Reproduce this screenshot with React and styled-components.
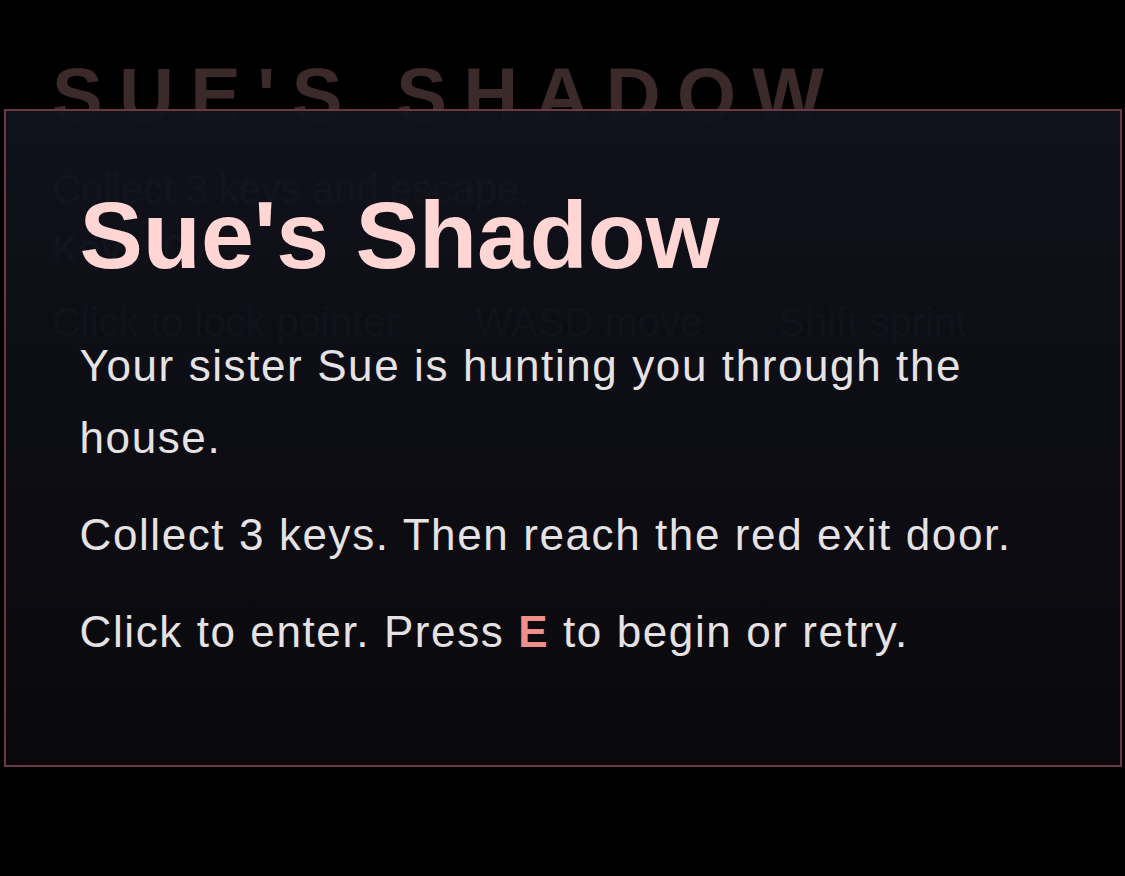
import React from "react";
import styled, { createGlobalStyle } from "styled-components";

const Global = createGlobalStyle`
  html, body { margin: 0; padding: 0; background: #000; }
  body { font-family: "Liberation Sans", Arial, sans-serif; overflow: hidden; }
  * { box-sizing: border-box; }
`;

const Stage = styled.div`
  position: relative;
  width: 100vw;
  height: 100vh;
  background: #000;
  overflow: hidden;
`;

const Hud = styled.div`
  display: flex;
  flex-direction: column;
  padding: 57px 0 0 52px;
  color: #484852;
`;

const HudTitle = styled.h1`
  margin: 0;
  font-size: 76px;
  line-height: 1;
  font-weight: 700;
  letter-spacing: 0.215em;
  color: #3b2a29;
`;

const HudLine = styled.div`
  font-size: 40px;
  line-height: 1.2;
  margin-top: ${(p) => p.$mt || 0}px;
`;

const HudRow = styled.div`
  display: flex;
  gap: 76px;
  font-size: 40px;
  line-height: 1.2;
  margin-top: ${(p) => p.$mt || 0}px;
`;

const Overlay = styled.div`
  position: absolute;
  inset: 0;
  display: flex;
  align-items: center;
  justify-content: center;
`;

const Panel = styled.div`
  width: 1118px;
  padding: 72px 75px 72px 74px;
  border: 2px solid #6a3a42;
  background: linear-gradient(
    180deg,
    rgba(17, 18, 28, 0.95) 0%,
    rgba(13, 13, 20, 0.95) 55%,
    rgba(9, 9, 13, 0.96) 100%
  );
`;

const Title = styled.h2`
  margin: 0 0 42px;
  font-size: 95px;
  line-height: 1.1;
  font-weight: 700;
  color: #ffd6d4;
`;

const Para = styled.p`
  margin: 0 0 25px;
  font-size: 44px;
  line-height: 72px;
  letter-spacing: 1.6px;
  color: #e6e2e3;
`;

const Key = styled.b`
  color: #f08e8c;
  font-weight: 700;
`;

export default function App() {
  return (
    <>
      <Global />
      <Stage>
        <Hud>
          <HudTitle>SUE'S SHADOW</HudTitle>
          <HudLine $mt={32}>Collect 3 keys and escape.</HudLine>
          <HudLine $mt={12}>Keys: 0 / 3</HudLine>
          <HudRow $mt={25}>
            <span>Click to lock pointer</span>
            <span>WASD move</span>
            <span>Shift sprint</span>
          </HudRow>
        </Hud>
        <Overlay>
          <Panel>
            <Title>Sue's Shadow</Title>
            <Para>Your sister Sue is hunting you through the house.</Para>
            <Para>Collect 3 keys. Then reach the red exit door.</Para>
            <Para>
              Click to enter. Press <Key>E</Key> to begin or retry.
            </Para>
          </Panel>
        </Overlay>
      </Stage>
    </>
  );
}
